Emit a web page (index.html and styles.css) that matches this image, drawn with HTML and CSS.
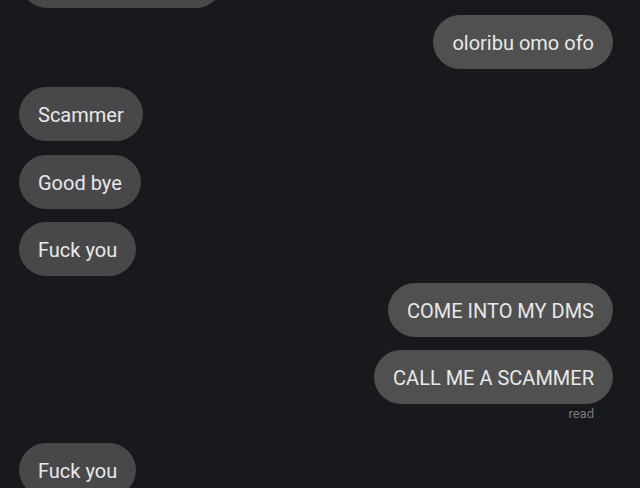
FILE: index.html
```html
<!DOCTYPE html>
<html>
<head>
<meta charset="utf-8">
<link rel="stylesheet" href="styles.css">
</head>
<body>
<div class="thread">
  <div class="row in cut"><div class="bubble recv bubble-cut"></div></div>
  <div class="row out gap-s"><div class="bubble sent">oloribu omo ofo</div></div>
  <div class="row in gap-l"><div class="bubble recv">Scammer</div></div>
  <div class="row in gap-ml"><div class="bubble recv">Good bye</div></div>
  <div class="row in gap-m"><div class="bubble recv">Fuck you</div></div>
  <div class="row out gap-s"><div class="bubble sent">COME INTO MY DMS</div></div>
  <div class="row out gap-m"><div class="bubble sent">CALL ME A SCAMMER</div></div>
  <div class="row out"><div class="status">read</div></div>
  <div class="row in gap-xl"><div class="bubble recv">Fuck you</div></div>
</div>
</body>
</html>
```
FILE: styles.css
```css
html, body {
  margin: 0;
  padding: 0;
  background: #18191d;
  height: 100%;
  overflow: hidden;
}
.thread {
  display: flex;
  flex-direction: column;
  padding: 0 27px 0 19px;
  font-family: Roboto, "Noto Sans", sans-serif;
}
.row {
  display: flex;
}
.row.in { justify-content: flex-start; }
.row.out { justify-content: flex-end; }
.cut { margin-top: -46px; }
.gap-s { margin-top: 7px; }
.gap-m { margin-top: 13px; }
.gap-ml { margin-top: 14px; }
.gap-l { margin-top: 18px; }
.gap-xl { margin-top: 21px; }
.bubble {
  height: 54px;
  box-sizing: border-box;
  display: flex;
  align-items: center;
  padding: 1px 19px 0;
  border-radius: 27px;
  font-size: 20px;
  color: #e8e8e8;
  white-space: nowrap;
}
.recv { background: #48484a; }
.sent { background: #505050; }
.bubble-cut { width: 203px; margin-left: 1px; }
.status {
  margin-top: 2px;
  margin-right: 19px;
  height: 16px;
  line-height: 16px;
  font-size: 13px;
  color: #7a7a7c;
}
```
